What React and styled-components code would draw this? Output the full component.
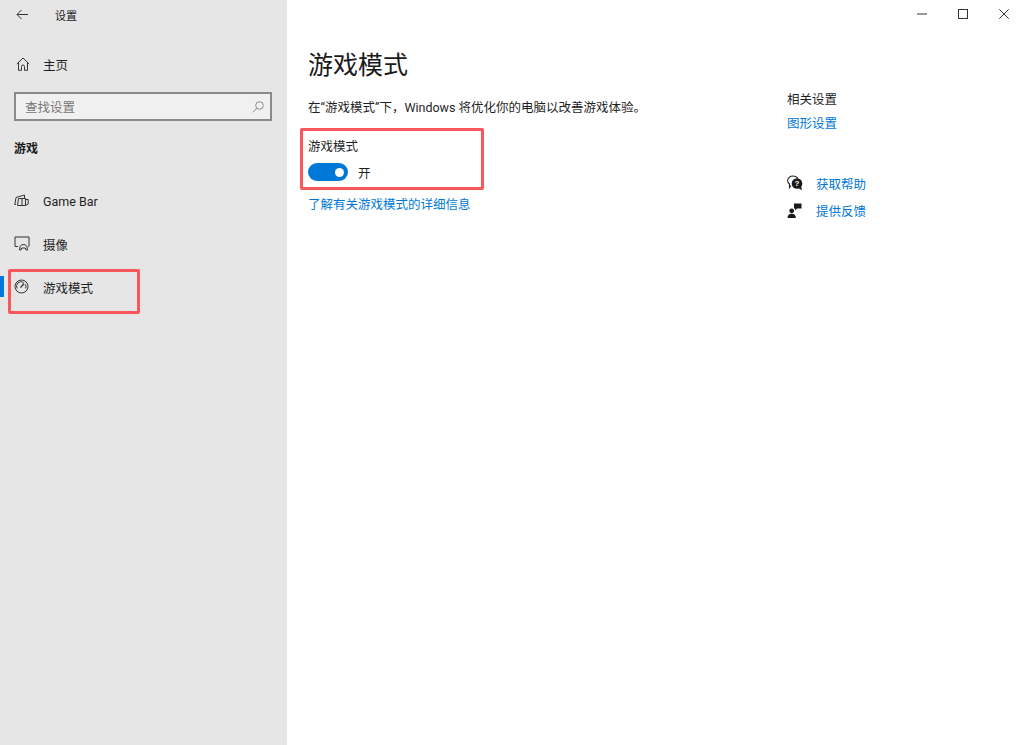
import React, { Fragment } from 'react';
import styled, { createGlobalStyle } from 'styled-components';

const GlobalStyle = createGlobalStyle`
	html, body {
		margin: 0;
		padding: 0;
		height: 100%;
		background: #ffffff;
		font-family: Roboto, "Noto Sans CJK SC", "Noto Sans", sans-serif;
		color: #1a1a1a;
	}
	#root {
		height: 100%;
	}
`;

const BackIcon = () => (
	<svg width="12" height="11" viewBox="0 0 12 11" fill="none" stroke="#333" strokeWidth="1">
		<path d="M12 5.500H1M5.500 1L1 5.500l4.500 4.500" />
	</svg>
);
const HomeIcon = () => (
	<svg width="14" height="14" viewBox="0 0 14 14" fill="none" stroke="#333" strokeWidth="1">
		<path d="M.8 7L7 1l6.200 6M2.500 5.500v7.800h3V9.500a1.500 1.500 0 0 1 3 0v3.800h3V5.500" />
	</svg>
);
const SearchIcon = () => (
	<svg width="12" height="12" viewBox="0 0 12 12" fill="none" stroke="#8a8a8a" strokeWidth="1">
		<circle cx="7.500" cy="4.500" r="3.800" />
		<path d="M4.800 7.200L.7 11.300" />
	</svg>
);
const GameBarIcon = () => (
	<svg width="15" height="13" viewBox="0 0 15 13" fill="none" stroke="#333" strokeWidth="1">
		<path d="M2 10.500H.8L2 3.500l8.500-2.500v3.500M3.500 11.500l1-7h7v7zM8 4.500v7M11.500 5.500h2.700v4.500l-2.700 1.500" />
	</svg>
);
const CameraIcon = () => (
	<svg width="16" height="15" viewBox="0 0 16 15" fill="none" stroke="#333" strokeWidth="1">
		<path d="M4 10.500H1V1h14v9.500h-.5M5.500 14l.6-3.500 1.600-1.800h3.600l1.600 1.800.6 3.500M5.500 14h1.500l.8-2h3.400l.8 2h1.500" />
	</svg>
);
const GaugeIcon = () => (
	<svg width="15" height="15" viewBox="0 0 15 15" fill="none" stroke="#333" strokeWidth="1">
		<circle cx="7.500" cy="7.500" r="6.500" />
		<path d="M3.200 9.500A4.500 4.500 0 0 1 9.500 3.400M11.300 5.400a4.500 4.500 0 0 1 .4 4" />
		<path d="M6.500 8.700L10 4.500" strokeWidth="1.300" />
	</svg>
);
const HelpIcon = () => (
	<svg width="17" height="16" viewBox="0 0 17 16">
		<path d="M4 10.500L2.500 12.500V9C1.300 8.100.6 6.900.6 5.500.6 3 3 1 6 1c2.200 0 4 1 4.800 2.500" fill="none" stroke="#222" strokeWidth="1.100" />
		<circle cx="10" cy="8.500" r="5.300" fill="#1a1a1a" />
		<path d="M11.500 13l3.500 2.500-1-4.500z" fill="#1a1a1a" />
		<text x="10" y="11.300" fontSize="8" fontWeight="700" textAnchor="middle" fill="#fff" fontFamily="Liberation Sans">?</text>
	</svg>
);
const FeedbackIcon = () => (
	<svg width="15" height="15" viewBox="0 0 15 15" fill="#1a1a1a">
		<path d="M7 .5h7.500v5H10L8 7.500V5.500H7z" />
		<circle cx="4.700" cy="7.800" r="2.400" />
		<path d="M.5 15c0-2.700 1.700-4.200 4.200-4.200S8.900 12.300 8.900 15z" />
	</svg>
);

const App = () => (
	<Fragment>
		<GlobalStyle />
		<Window>
			<Sidebar>
				<TitleRow>
					<IconSlot><BackIcon /></IconSlot>
					<AppTitle>设置</AppTitle>
				</TitleRow>
				<HomeRow>
					<IconSlot><HomeIcon /></IconSlot>
					<NavLabel>主页</NavLabel>
				</HomeRow>
				<SearchBox>
					<SearchText>查找设置</SearchText>
					<SearchIcon />
				</SearchBox>
				<GroupTitle>游戏</GroupTitle>
				<NavList>
					<NavItem>
						<NavIcon><GameBarIcon /></NavIcon>
						<NavLabel>Game Bar</NavLabel>
					</NavItem>
					<NavItem>
						<NavIcon><CameraIcon /></NavIcon>
						<NavLabel>摄像</NavLabel>
					</NavItem>
					<NavItem $active>
						<NavIcon><GaugeIcon /></NavIcon>
						<NavLabel>游戏模式</NavLabel>
						<NavHighlight />
					</NavItem>
				</NavList>
			</Sidebar>
			<Main>
				<WindowControls>
					<ControlButton>
						<svg width="10" height="10" viewBox="0 0 10 10"><path d="M0 5h10" stroke="#333" /></svg>
					</ControlButton>
					<ControlButton>
						<svg width="10" height="10" viewBox="0 0 10 10"><rect x=".5" y=".5" width="9" height="9" fill="none" stroke="#333" /></svg>
					</ControlButton>
					<ControlButton>
						<svg width="10" height="10" viewBox="0 0 10 10"><path d="M.3.3l9.400 9.400M9.700.3L.3 9.700" stroke="#333" /></svg>
					</ControlButton>
				</WindowControls>
				<Columns>
					<Content>
						<PageTitle>游戏模式</PageTitle>
						<Description>在“游戏模式”下，Windows 将优化你的电脑以改善游戏体验。</Description>
						<ToggleGroup>
							<ToggleLabel>游戏模式</ToggleLabel>
							<ToggleRow>
								<Toggle><ToggleKnob /></Toggle>
								<ToggleState>开</ToggleState>
							</ToggleRow>
							<ToggleHighlight />
						</ToggleGroup>
						<LearnMore>了解有关游戏模式的详细信息</LearnMore>
					</Content>
					<Aside>
						<AsideTitle>相关设置</AsideTitle>
						<AsideLink>图形设置</AsideLink>
						<HelpList>
							<HelpRow>
								<HelpIconSlot><HelpIcon /></HelpIconSlot>
								<HelpLink>获取帮助</HelpLink>
							</HelpRow>
							<HelpRow>
								<HelpIconSlot><FeedbackIcon /></HelpIconSlot>
								<HelpLink>提供反馈</HelpLink>
							</HelpRow>
						</HelpList>
					</Aside>
				</Columns>
			</Main>
		</Window>
	</Fragment>
);

export default App;

//--------CSS----------//
const Window = styled.div`
	display: flex;
	height: 745px;
	width: 1024px;
	overflow: hidden;
`;
const Sidebar = styled.aside`
	width: 287px;
	flex: none;
	background: #e6e6e6;
	display: flex;
	flex-direction: column;
`;
const TitleRow = styled.div`
	display: flex;
	align-items: center;
	height: 29px;
	padding-left: 16px;
`;
const IconSlot = styled.span`
	display: flex;
	width: 27px;
	align-items: center;
`;
const AppTitle = styled.span`
	margin-left: 12px;
	font-size: 11px;
`;
const HomeRow = styled.div`
	display: flex;
	align-items: center;
	height: 40px;
	margin-top: 15px;
	padding-left: 16px;
`;
const NavLabel = styled.span`
	font-size: 12.5px;
	color: #1f1f1f;
`;
const SearchBox = styled.div`
	display: flex;
	align-items: center;
	justify-content: space-between;
	box-sizing: border-box;
	width: 258px;
	height: 29px;
	margin: 8px 0 0 14px;
	padding: 0 6px 0 9px;
	background: #f0f0f0;
	border: 2px solid #8a8a8a;
`;
const SearchText = styled.span`
	font-size: 12.5px;
	color: #767676;
`;
const GroupTitle = styled.div`
	margin: 16px 0 0 14px;
	height: 24px;
	line-height: 24px;
	font-size: 12px;
	font-weight: 700;
`;
const NavList = styled.div`
	display: flex;
	flex-direction: column;
	margin-top: 19px;
`;
const NavItem = styled.div`
	position: relative;
	display: flex;
	align-items: center;
	height: 43px;
	padding-left: 14px;
	&::before {
		content: '';
		display: ${(props) => (props.$active ? 'block' : 'none')};
		position: absolute;
		left: 0;
		top: 10px;
		width: 4px;
		height: 21px;
		background: #0078d7;
	}
`;
const NavIcon = styled.span`
	display: flex;
	width: 29px;
	margin-top: -3px;
	align-items: center;
`;
const NavHighlight = styled.div`
	position: absolute;
	left: 8px;
	top: 3px;
	width: 132px;
	height: 45px;
	box-sizing: border-box;
	border: 3px solid #f9575c;
	border-radius: 2px;
`;
const Main = styled.main`
	flex: 1;
	display: flex;
	flex-direction: column;
	min-width: 0;
`;
const WindowControls = styled.div`
	display: flex;
	justify-content: flex-end;
	height: 28px;
`;
const ControlButton = styled.div`
	display: flex;
	align-items: center;
	justify-content: center;
	width: 41px;
`;
const Columns = styled.div`
	display: flex;
	padding-left: 21px;
`;
const Content = styled.div`
	width: 479px;
	flex: none;
	display: flex;
	flex-direction: column;
	align-items: flex-start;
`;
const PageTitle = styled.h1`
	margin: 18px 0 0;
	height: 40px;
	line-height: 40px;
	font-size: 25px;
	font-weight: 400;
	color: #1a1a1a;
`;
const Description = styled.p`
	margin: 12px 0 0;
	height: 20px;
	line-height: 20px;
	font-size: 12.5px;
	color: #1f1f1f;
	white-space: nowrap;
`;
const ToggleGroup = styled.div`
	position: relative;
	margin-top: 20px;
	width: 160px;
	display: flex;
	flex-direction: column;
`;
const ToggleLabel = styled.div`
	height: 18px;
	line-height: 18px;
	font-size: 12.5px;
	color: #1f1f1f;
`;
const ToggleRow = styled.div`
	display: flex;
	align-items: center;
	margin-top: 7px;
	height: 18px;
`;
const Toggle = styled.div`
	display: flex;
	align-items: center;
	justify-content: flex-end;
	box-sizing: border-box;
	width: 40px;
	height: 18px;
	padding-right: 4px;
	border-radius: 9px;
	background: #0078d7;
`;
const ToggleKnob = styled.span`
	width: 9px;
	height: 9px;
	border-radius: 50%;
	background: #ffffff;
`;
const ToggleState = styled.span`
	margin-left: 10px;
	font-size: 12.5px;
	color: #1f1f1f;
`;
const ToggleHighlight = styled.div`
	position: absolute;
	left: -8px;
	top: -10px;
	width: 184px;
	height: 62px;
	box-sizing: border-box;
	border: 3px solid #f9575c;
	border-radius: 2px;
`;
const LearnMore = styled.a`
	margin-top: 15px;
	height: 18px;
	line-height: 18px;
	font-size: 12.5px;
	color: #0078d7;
`;
const Aside = styled.div`
	display: flex;
	flex-direction: column;
	padding-top: 62px;
`;
const AsideTitle = styled.div`
	height: 20px;
	line-height: 20px;
	font-size: 12.5px;
	color: #1f1f1f;
`;
const AsideLink = styled.a`
	margin-top: 4px;
	height: 20px;
	line-height: 20px;
	font-size: 12.5px;
	color: #0078d7;
`;
const HelpList = styled.div`
	display: flex;
	flex-direction: column;
	gap: 7px;
	margin-top: 39px;
`;
const HelpRow = styled.div`
	display: flex;
	align-items: center;
	height: 20px;
`;
const HelpIconSlot = styled.span`
	display: flex;
	width: 29px;
`;
const HelpLink = styled.a`
	font-size: 12.5px;
	color: #0078d7;
`;
